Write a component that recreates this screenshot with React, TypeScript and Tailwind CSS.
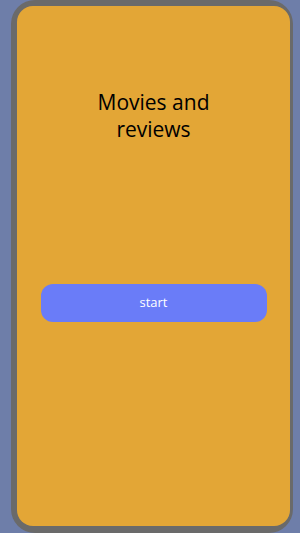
import React from "react";

export default function App() {
  return (
    <div className="w-[300px] h-[533px] bg-[#6e7ea9] overflow-hidden" style={{ fontFamily: '"Open Sans", "Noto Sans", sans-serif' }}>
      <div className="ml-[11px] w-[282px] h-[533px] bg-[#6a6a6a] rounded-[24px] pt-[6px] pl-[6px] pr-[3px] pb-[7px]">
        <div className="h-full bg-[#e3a636] rounded-[16px] flex flex-col items-center">
          <h1 className="mt-[83px] w-[130px] text-center text-[21px] leading-[27px] text-black font-normal">Movies and reviews</h1>
          <button className="mt-[141px] w-[226px] h-[38px] rounded-[12px] bg-[#6a7cf8] text-white text-[13px]">start</button>
        </div>
      </div>
    </div>
  );
}
